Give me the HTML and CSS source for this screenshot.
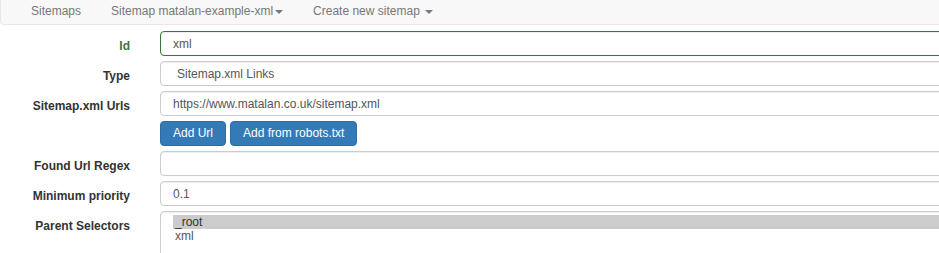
FILE: index.html
```html
<!DOCTYPE HTML>
<html>
<head>
    <meta charset='utf-8'>
    <link rel="stylesheet" href="styles.css">
</head>
<body>
    <!--導覽列-->
    <nav class="navbar">
        <ul class="navList">
            <li><a href="#">Sitemaps</a></li>
            <li><a href="#">Sitemap matalan-example-xml<span class="caret"></span></a></li>
            <li><a href="#">Create new sitemap <span class="caret"></span></a></li>
        </ul>
    </nav>

    <!--表單-->
    <form class="sitemapForm">
        <div class="formRow hasSuccess">
            <label class="controlLabel" for="sitemapId">Id</label>
            <input class="formControl" id="sitemapId" type="text" value="xml">
        </div>

        <div class="formRow">
            <label class="controlLabel" for="sitemapType">Type</label>
            <select class="formControl typeSelect" id="sitemapType">
                <option selected>Sitemap.xml Links</option>
                <option>Element</option>
                <option>Link</option>
            </select>
        </div>

        <div class="formRow">
            <label class="controlLabel" for="sitemapUrls">Sitemap.xml Urls</label>
            <input class="formControl" id="sitemapUrls" type="text" value="https://www.matalan.co.uk/sitemap.xml">
        </div>

        <div class="formRow">
            <span></span>
            <div class="btnGroup">
                <button type="button" class="btn">Add Url</button>
                <button type="button" class="btn">Add from robots.txt</button>
            </div>
        </div>

        <div class="formRow">
            <label class="controlLabel" for="urlRegex">Found Url Regex</label>
            <input class="formControl" id="urlRegex" type="text" value="">
        </div>

        <div class="formRow">
            <label class="controlLabel" for="minPriority">Minimum priority</label>
            <input class="formControl" id="minPriority" type="text" value="0.1">
        </div>

        <div class="formRow">
            <label class="controlLabel" for="parentSelectors">Parent Selectors</label>
            <select class="formControl parentSelect" id="parentSelectors" multiple>
                <option selected>_root</option>
                <option>xml</option>
            </select>
        </div>
    </form>
</body>
</html>
```

FILE: styles.css
```css
html, body {
    margin: 0px;
    padding: 0px;
    overflow: hidden;
}

body {
    font-family: "Liberation Sans", Arial, sans-serif;
    font-size: 12px;
    color: #333;
    background-color: white;
}

.navbar {
    box-sizing: border-box;
    height: 25px;
    padding-top: 1px;
    padding-left: 15px;
    background-color: #f8f8f8;
    border: 1px solid #e7e7e7;
    border-top: none;
    border-radius: 0px 0px 4px 4px;
    width: 1100px;
}

.navList {
    display: flex;
    margin: 0px;
    padding: 0px;
    list-style: none;
}

.navList a {
    display: block;
    padding: 0px 15px;
    line-height: 20px;
    color: #777;
    text-decoration: none;
}

.caret {
    display: inline-block;
    width: 0px;
    height: 0px;
    margin-left: 2px;
    vertical-align: middle;
    border-top: 4px solid #777;
    border-left: 4px solid transparent;
    border-right: 4px solid transparent;
}

.sitemapForm {
    display: flex;
    flex-direction: column;
    gap: 5px;
    width: 1100px;
    padding-top: 6px;
}

.formRow {
    display: grid;
    grid-template-columns: 130px 1fr;
    column-gap: 30px;
}

.controlLabel {
    padding-top: 7px;
    text-align: right;
    font-weight: bold;
    line-height: 17px;
}

.formControl {
    box-sizing: border-box;
    height: 25px;
    padding: 3px 12px;
    font-family: inherit;
    font-size: 12px;
    color: #555;
    background-color: white;
    border: 1px solid #ccc;
    border-radius: 4px;
    box-shadow: inset 0 1px 1px rgba(0,0,0,0.075);
    outline: none;
}

.hasSuccess .controlLabel {
    color: #3c763d;
}

.hasSuccess .formControl {
    border-color: #3c763d;
}

.typeSelect {
    padding-left: 12px;
}

.parentSelect {
    height: 70px;
    padding: 3px 12px;
    overflow: hidden;
}

.parentSelect option {
    padding: 0px 2px;
    line-height: 15px;
}

.parentSelect option:checked {
    color: #333;
    background: #ccc linear-gradient(#ccc, #ccc);
}

.btnGroup {
    display: flex;
    gap: 4px;
}

.btn {
    height: 25px;
    padding: 3px 12px;
    font-family: inherit;
    font-size: 12px;
    line-height: 17px;
    color: white;
    background-color: #337ab7;
    border: 1px solid #2e6da4;
    border-radius: 4px;
    cursor: pointer;
}

.btn:hover {
    background-color: #286090;
}
```
